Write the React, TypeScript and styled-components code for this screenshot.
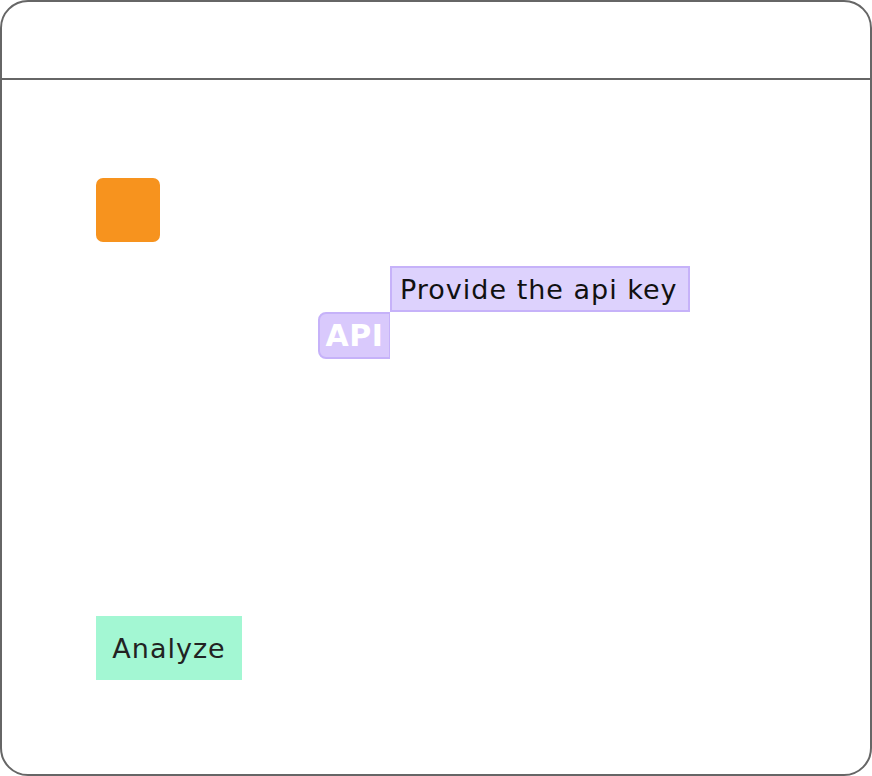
import React from 'react';
import styled, { createGlobalStyle } from 'styled-components';

const GlobalStyle = createGlobalStyle`
  html, body {
    margin: 0;
    padding: 0;
    background: #fff;
  }
  body {
    font-family: "DejaVu Sans", "Noto Sans", sans-serif;
  }
`;

export default function App() {
  return (
    <>
      <GlobalStyle />
      <Frame>
        <Header />
        <Body>
          <Logo />
          <KeyGrid>
            <Hint>Provide the api key</Hint>
            <Tag>API</Tag>
          </KeyGrid>
          <AnalyzeButton>Analyze</AnalyzeButton>
        </Body>
      </Frame>
    </>
  );
}

const Frame = styled.div`
  width: 872px;
  height: 776px;
  box-sizing: border-box;
  border: 2px solid #666;
  border-radius: 28px;
  display: flex;
  flex-direction: column;
  overflow: hidden;
`;

const Header = styled.div`
  height: 76px;
  border-bottom: 2px solid #666;
  flex-shrink: 0;
`;

const Body = styled.div`
  display: flex;
  flex-direction: column;
  align-items: flex-start;
  padding: 98px 0 0 94px;
`;

const Logo = styled.div`
  width: 64px;
  height: 64px;
  border-radius: 7px;
  background: #f7931e;
`;

const KeyGrid = styled.div`
  display: grid;
  grid-template-columns: 72px auto;
  grid-template-rows: 46px 47px;
  margin: 24px 0 0 222px;
`;

const Hint = styled.div`
  grid-column: 2;
  grid-row: 1;
  box-sizing: border-box;
  width: 300px;
  border: 2px solid #c6b2f9;
  background: #ddd2fd;
  color: #111;
  font-size: 27px;
  letter-spacing: 1px;
  white-space: nowrap;
  display: flex;
  align-items: center;
  padding-left: 8px;
`;

const Tag = styled.div`
  grid-column: 1;
  grid-row: 2;
  box-sizing: border-box;
  border: 2px solid #c6b2f9;
  border-right-width: 1px;
  border-radius: 8px 0 0 8px;
  background: #d9c9fc;
  color: #fff;
  font-size: 30px;
  font-weight: 600;
  letter-spacing: 0.5px;
  display: flex;
  align-items: center;
  justify-content: center;
`;

const AnalyzeButton = styled.button`
  margin-top: 257px;
  width: 146px;
  height: 64px;
  border: none;
  background: #a3f7d3;
  color: #222;
  font-family: "DejaVu Sans", "Noto Sans", sans-serif;
  font-size: 27px;
  letter-spacing: 1px;
  padding: 0;
`;
